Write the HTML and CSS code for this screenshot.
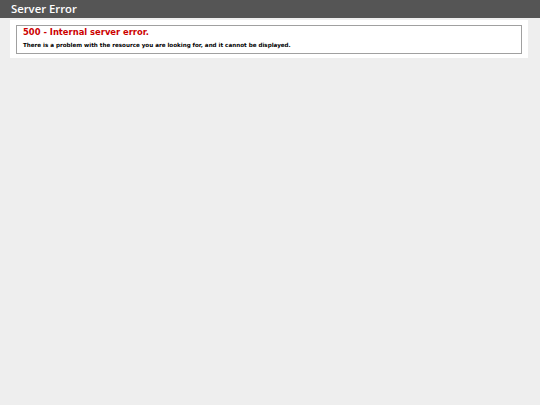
FILE: index.html
```
<!DOCTYPE html>
<html>
<head>
<meta charset="utf-8">
<title>500 - Internal server error.</title>
<link rel="stylesheet" href="styles.css">
</head>
<body>
<div class="header"><h1 class="title">Server Error</h1></div>
<div class="content">
  <div class="container">
    <fieldset class="box">
      <h2 class="code">500 - Internal server error.</h2>
      <h3 class="msg">There is a problem with the resource you are looking for, and it cannot be displayed.</h3>
    </fieldset>
  </div>
</div>
</body>
</html>
```
FILE: styles.css
```
html, body { margin: 0; padding: 0; }
body {
  background: #eeeeee;
  font-family: "DejaVu Sans", Verdana, sans-serif;
  font-size: 5.6px;
}
.header {
  background: #555555;
  color: #fff;
  height: 18px;
  padding: 0 11px;
  display: flex;
  align-items: center;
}
.title {
  margin: 0;
  font-family: "Open Sans", "DejaVu Sans", sans-serif;
  font-size: 11.3px;
  font-weight: 600;
  line-height: 14px;
  color: #fff;
}
.content { padding: 2px 12px 0 10px; }
.container {
  background: #fff;
  padding: 5px 6px 4px 6px;
}
.box {
  margin: 0;
  border: 1px solid #a0a0a0;
  box-shadow: inset 1px 1px 0 #fff, 1px 1px 0 #fff;
  padding: 1px 6px 4px 6px;
}
.code {
  margin: 0;
  font-size: 8.4px;
  line-height: 11px;
  color: #cc0000;
  font-weight: bold;
}
.msg {
  margin: 4px 0 0 0;
  font-size: 5.6px;
  line-height: 7px;
  color: #000;
  font-weight: bold;
}
```
